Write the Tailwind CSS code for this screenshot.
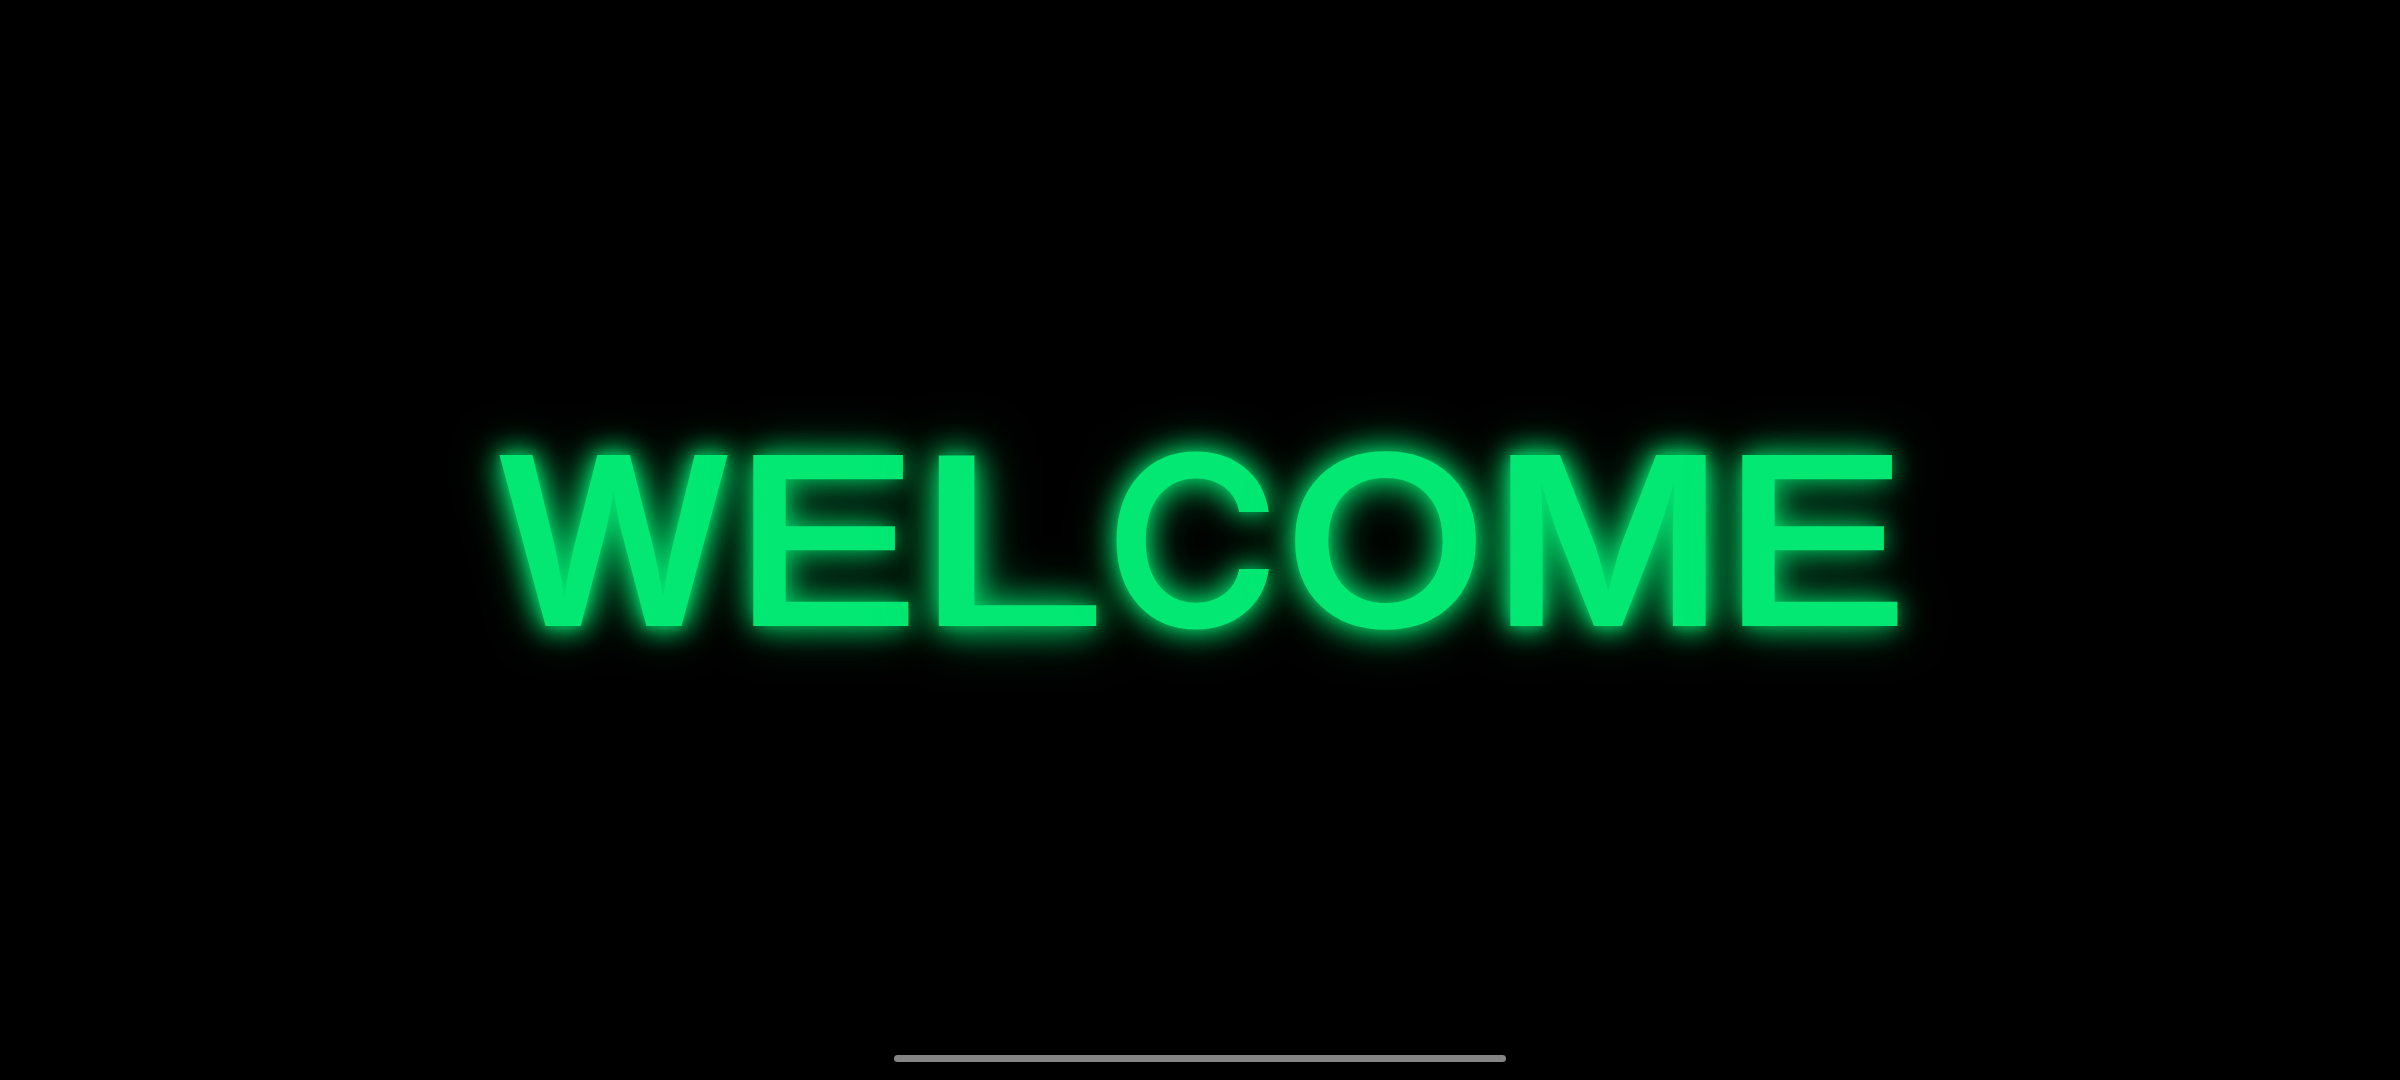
<!DOCTYPE html>
<html lang="en">
<head>
  <meta charset="UTF-8" />
  <script src="https://cdn.jsdelivr.net/npm/@tailwindcss/browser@4"></script>
  <title>Welcome</title>
</head>
<body class="bg-black">
  <main class="h-[1080px] w-[2400px] overflow-hidden flex flex-col items-center pt-[423px]">
    <!-- neon title, each letter fitted on its own -->
    <h1 class="flex h-[235px] ml-[-3px] font-['Inter',sans-serif] font-semibold text-[235px] leading-none text-[#02e873] [text-shadow:0_0_10px_#02e87370,0_0_26px_#02e873c0,0_0_30px_#02e873a0,0_0_48px_#02e873a0]">
      <span class="flex justify-center w-[228px]">W</span>
      <span class="flex justify-center w-[155px] ml-[20px] mt-[-3px] scale-x-[1.14] font-['Liberation_Sans',sans-serif] font-normal text-[240px] [-webkit-text-stroke:6px_#02e873]">E</span>
      <span class="flex justify-center w-[158px] ml-[27px] mt-[-5px] scale-x-[1.43] font-['Liberation_Sans',sans-serif] font-normal text-[245px] [-webkit-text-stroke:2px_#02e873]">L</span>
      <span class="flex justify-center w-[156px] ml-[26px] scale-x-[1.01] font-medium [-webkit-text-stroke:3px_#02e873]">C</span>
      <span class="flex justify-center w-[185px] ml-[23px] scale-x-[1.15] font-medium [-webkit-text-stroke:3px_#02e873]">O</span>
      <span class="flex justify-center w-[200px] ml-[30px] scale-x-[1.07]">M</span>
      <span class="flex justify-center w-[155px] ml-[29px] mr-[6px] mt-[-3px] scale-x-[1.14] font-['Liberation_Sans',sans-serif] font-normal text-[240px] [-webkit-text-stroke:6px_#02e873]">E</span>
    </h1>
    <div class="mt-auto mb-[18px] w-[612px] h-[7px] rounded-full bg-[#858585]"></div>
  </main>
</body>
</html>
